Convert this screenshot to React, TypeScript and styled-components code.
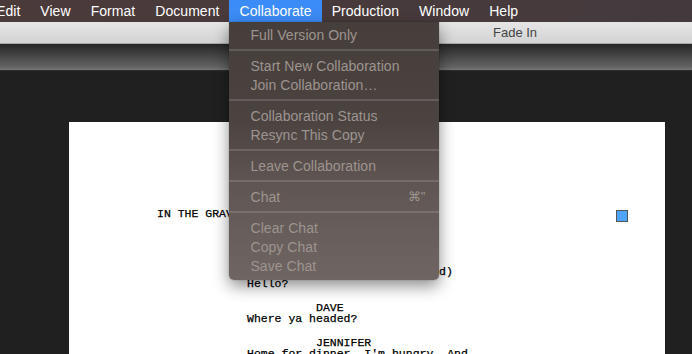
import styled, { createGlobalStyle } from "styled-components";

const GlobalStyle = createGlobalStyle`
  html, body {
    margin: 0;
    padding: 0;
    background: #202020;
    overflow: hidden;
  }
  body {
    font-family: "Liberation Sans", Arial, sans-serif;
  }
`;

const menuTitles = ["Edit", "View", "Format", "Document", "Collaborate", "Production", "Window", "Help"];

type Entry = { label: string; shortcut?: string } | "sep";

const collaborateMenu: Entry[] = [
  { label: "Full Version Only" },
  "sep",
  { label: "Start New Collaboration" },
  { label: "Join Collaboration…" },
  "sep",
  { label: "Collaboration Status" },
  { label: "Resync This Copy" },
  "sep",
  { label: "Leave Collaboration" },
  "sep",
  { label: "Chat", shortcut: "⌘\"" },
  "sep",
  { label: "Clear Chat" },
  { label: "Copy Chat" },
  { label: "Save Chat" },
];

type Kind = "action" | "character" | "paren" | "dialogue";

const script: { kind: Kind; text: string; marker?: boolean }[] = [
  { kind: "action", text: "IN THE GRAVEYARD", marker: true },
  { kind: "action", text: "" },
  { kind: "action", text: "" },
  { kind: "action", text: "" },
  { kind: "character", text: "JENNIFER" },
  { kind: "paren", text: "(glancing up, annoyed)" },
  { kind: "dialogue", text: "Hello?" },
  { kind: "action", text: "" },
  { kind: "character", text: "DAVE" },
  { kind: "dialogue", text: "Where ya headed?" },
  { kind: "action", text: "" },
  { kind: "character", text: "JENNIFER" },
  { kind: "dialogue", text: "Home for dinner. I'm hungry. And" },
  { kind: "dialogue", text: "tired." },
];

const indents: Record<Kind, number> = {
  action: 0,
  dialogue: 90,
  paren: 144,
  character: 159,
};

export default function App() {
  return (
    <>
      <GlobalStyle />
      <Screen>
        <MenuBar>
          <MenuTitles>
            {menuTitles.map(title => (
              <MenuTitle key={title} $active={title === "Collaborate"}>
                {title}
                {title === "Collaborate" && (
                  <Dropdown>
                    {collaborateMenu.map((entry, i) =>
                      entry === "sep" ? (
                        <Separator key={i} />
                      ) : (
                        <MenuItem key={i}>
                          <span>{entry.label}</span>
                          {entry.shortcut && <Shortcut>{entry.shortcut}</Shortcut>}
                        </MenuItem>
                      )
                    )}
                  </Dropdown>
                )}
              </MenuTitle>
            ))}
          </MenuTitles>
        </MenuBar>

        <TitleBar>
          <WindowTitle>Fade In</WindowTitle>
        </TitleBar>
        <Toolbar />

        <Workspace>
          <Page>
            {script.map((line, i) => (
              <ScriptLine key={i} $indent={indents[line.kind]}>
                <span>{line.text}</span>
                {line.marker && <Marker />}
              </ScriptLine>
            ))}
          </Page>
        </Workspace>
      </Screen>
    </>
  );
}

const Screen = styled.div`
  width: 692px;
  height: 354px;
  display: flex;
  flex-direction: column;
  overflow: hidden;
`;

const MenuBar = styled.div`
  height: 22px;
  flex-shrink: 0;
  background: linear-gradient(to right, #4b3a3a, #443a3d);
  position: relative;
  z-index: 10;
`;

const MenuTitles = styled.ul`
  display: flex;
  margin: 0 0 0 -14px;
  padding: 0;
  list-style: none;
  height: 100%;
`;

const MenuTitle = styled.li<{ $active?: boolean }>`
  position: relative;
  display: flex;
  align-items: center;
  padding: 0 10px;
  font-size: 14px;
  letter-spacing: 0.05px;
  color: #ffffff;
  background: ${p => (p.$active ? "#3b8cf6" : "transparent")};
`;

const Dropdown = styled.div`
  position: absolute;
  top: 100%;
  left: 0;
  width: 210px;
  padding: 3px 0 5px;
  display: flex;
  flex-direction: column;
  background: linear-gradient(to bottom, #463e3b 0%, #4b4340 38%, #5f5552 62%, #6f6562 100%);
  border-radius: 0 0 5px 5px;
  box-shadow: 0 6px 16px rgba(0, 0, 0, 0.45), 0 0 1px rgba(0, 0, 0, 0.6);
`;

const MenuItem = styled.div`
  height: 19px;
  display: flex;
  align-items: center;
  justify-content: space-between;
  padding: 0 14px 0 21px;
  font-size: 14px;
  color: #9d9490;
  white-space: nowrap;
`;

const Shortcut = styled.span`
  font-size: 13px;
`;

const Separator = styled.div`
  height: 12px;
  display: flex;
  align-items: center;

  &::before {
    content: "";
    flex: 1;
    height: 2px;
    background: rgba(255, 255, 255, 0.14);
  }
`;

const TitleBar = styled.div`
  height: 21px;
  flex-shrink: 0;
  display: flex;
  align-items: center;
  padding-left: 493px;
  background: linear-gradient(to bottom, #e6e6e6, #d3d3d3);
  border-bottom: 1px solid #a9a9a9;
`;

const WindowTitle = styled.span`
  font-size: 13px;
  color: #444;
`;

const Toolbar = styled.div`
  height: 24px;
  flex-shrink: 0;
  background: linear-gradient(to bottom, #262626, #666666);
  border-bottom: 2px solid #707070;
  box-shadow: 0 1px 0 #2e2e2e;
`;

const Workspace = styled.div`
  flex: 1;
  margin-top: 1px;
  padding: 51px 0 0 69px;
  background: #202020;
  overflow: hidden;
`;

const Page = styled.div`
  width: 596px;
  min-height: 400px;
  box-sizing: border-box;
  padding: 86px 37px 0 88px;
  background: #ffffff;
  font-family: "Liberation Mono", "Courier New", monospace;
  font-size: 11.5px;
  line-height: 11.7px;
  color: #000;
  -webkit-text-stroke: 0.25px #000;
`;

const ScriptLine = styled.div<{ $indent: number }>`
  height: 11.7px;
  display: flex;
  justify-content: space-between;
  align-items: flex-start;
  padding-left: ${p => p.$indent}px;
  white-space: pre;
`;

const Marker = styled.div`
  width: 10px;
  height: 10px;
  margin-top: 2px;
  background: #4ea4fb;
  border: 1px solid #555;
`;
